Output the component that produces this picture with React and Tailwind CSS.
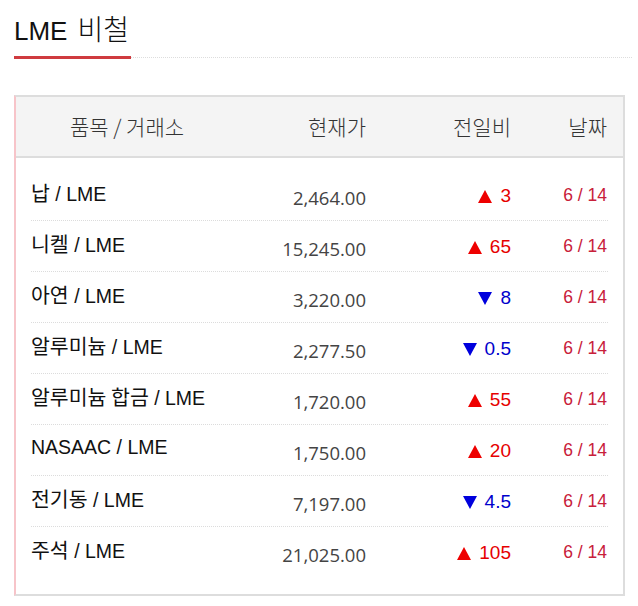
export default function App() {
  const rows = [
    { ko: "납", name: " / LME", price: "2,464.00", up: true, chg: "3" },
    { ko: "니켈", name: " / LME", price: "15,245.00", up: true, chg: "65" },
    { ko: "아연", name: " / LME", price: "3,220.00", up: false, chg: "8" },
    { ko: "알루미늄", name: " / LME", price: "2,277.50", up: false, chg: "0.5" },
    { ko: "알루미늄 합금", name: " / LME", price: "1,720.00", up: true, chg: "55" },
    { ko: "", name: "NASAAC / LME", price: "1,750.00", up: true, chg: "20" },
    { ko: "전기동", name: " / LME", price: "7,197.00", up: false, chg: "4.5" },
    { ko: "주석", name: " / LME", price: "21,025.00", up: true, chg: "105" },
  ];
  const sans = "font-['Liberation_Sans','Noto_Sans_CJK_KR',sans-serif]";
  return (
    <div className="w-[638px] h-[606px] bg-white overflow-hidden">
      <div className="pl-[14px] pr-[6px] pt-[13px]">
        <h1 className={`${sans} h-[30px] text-[26px] leading-[30px] text-[#111] font-normal whitespace-pre`}>
          LME<span className="ml-[10px] text-[28px] leading-[30px] font-['Noto_Sans_CJK_KR',sans-serif] font-light">비철</span>
        </h1>
        <div className="mt-[13px] flex items-center">
          <div className="w-[117px] h-[3px] bg-[#cf3b3f]" />
          <div className="flex-1 border-b border-dotted border-[#ddd]" />
        </div>
      </div>
      <div className="ml-[14px] mt-[36px] w-[611px] border-2 border-[#dddddd] border-l-[#f7c4c9]">
        <div className="h-[61px] bg-[#f4f4f4] border-b-2 border-[#dddddd] px-[15px] grid grid-cols-[205px_130px_145px_96px] items-center font-['Noto_Sans_CJK_KR',sans-serif] text-[21px] font-light text-[#333]">
          <div className="text-center pr-[13px]">품목 / 거래소</div>
          <div className="text-right">현재가</div>
          <div className="text-right">전일비</div>
          <div className="text-right">날짜</div>
        </div>
        <div className="pt-[12px] pb-[16px] px-[15px]">
          {rows.map((r, i) => (
            <div
              key={i}
              className={`h-[51px] grid grid-cols-[205px_130px_145px_96px] items-start ${i < rows.length - 1 ? "border-b border-dotted border-[#dcdcdc]" : ""}`}
            >
              <div className={`${sans} h-[24px] text-[19.5px] leading-[24px] mt-[10px] text-[#111] whitespace-pre`}>
                {r.ko && <span className="text-[20.5px] leading-[24px] font-['Noto_Sans_CJK_KR',sans-serif]">{r.ko}</span>}
                {r.name}
              </div>
              <div className="font-['Open_Sans',sans-serif] text-[18.5px] leading-[24px] pt-[16px] text-right text-[#444]">{r.price}</div>
              <div className={`${sans} text-[19px] leading-[24px] pt-[14px] flex justify-end items-center gap-[8px] ${r.up ? "text-[#e60000]" : "text-[#0000cc]"}`}>
                <svg width="14" height="13" viewBox="0 0 14 13" className="mt-[1px]">
                  {r.up ? (
                    <polygon points="7,0 14,13 0,13" fill="#ee0000" />
                  ) : (
                    <polygon points="0,0 14,0 7,13" fill="#0000dd" />
                  )}
                </svg>
                <span>{r.chg}</span>
              </div>
              <div className={`${sans} text-[17.5px] leading-[24px] pt-[13px] text-right text-[#c8203a]`}>6 / 14</div>
            </div>
          ))}
        </div>
      </div>
    </div>
  );
}
